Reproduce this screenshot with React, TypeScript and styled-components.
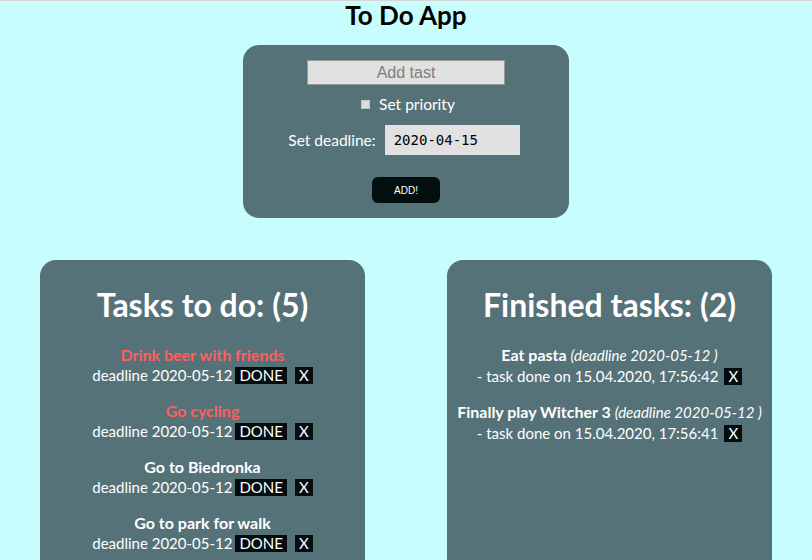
import React from "react";
import styled, { createGlobalStyle } from "styled-components";

const Global = createGlobalStyle`
  html { border-top: 1px solid #d6d6d6; background: #c8fdfe; }
  body { margin: 0; background: #c8fdfe; font-family: "Lato", "Open Sans", sans-serif; }
`;

const Page = styled.div`
  display: flex;
  flex-direction: column;
  align-items: center;
  width: 812px;
`;

const Title = styled.h1`
  margin: 0;
  height: 44px;
  flex-shrink: 0;
  line-height: 28px;
  font-size: 26px;
  font-weight: 700;
  color: #000;
`;

const FormPanel = styled.form`
  box-sizing: border-box;
  width: 326px;
  height: 173px;
  flex-shrink: 0;
  background: #557278;
  border-radius: 16px;
  display: flex;
  flex-direction: column;
  align-items: center;
  padding-top: 15px;
`;

const TextInput = styled.input`
  box-sizing: border-box;
  width: 198px;
  height: 25px;
  background: #e1e1e1;
  border: 1px solid #999;
  font-family: "Liberation Sans", Arial, sans-serif;
  font-size: 16px;
  text-align: center;
  outline: none;
  &::placeholder { color: #7d7d7d; }
`;

const CheckRow = styled.label`
  display: flex;
  align-items: center;
  gap: 9px;
  margin-top: 8px;
  margin-left: 4px;
  height: 22px;
  color: #fff;
  font-size: 15.5px;
`;

const Check = styled.input`
  appearance: none;
  margin: 0;
  width: 9px;
  height: 9px;
  background: #dcdcdc;
  border: 1px solid #c4c4c4;
  box-sizing: border-box;
`;

const DeadlineRow = styled.div`
  display: flex;
  align-items: center;
  gap: 9px;
  margin-top: 10px;
  margin-left: -4px;
  color: #fff;
  font-size: 15.5px;
`;

const DateInput = styled.input`
  box-sizing: border-box;
  width: 135px;
  height: 30px;
  background: #e1e1e1;
  border: none;
  padding: 0 0 0 9px;
  font-family: "DejaVu Sans Mono", monospace;
  font-size: 14px;
  color: #000;
  outline: none;
`;

const AddButton = styled.button`
  margin-top: 22px;
  width: 68px;
  height: 26px;
  background: #030f0f;
  color: #fff;
  border: none;
  border-radius: 6px;
  font-family: "Liberation Sans", Arial, sans-serif;
  font-size: 10px;
`;

const Columns = styled.div`
  display: flex;
  justify-content: space-between;
  width: 732px;
  margin-top: 42px;
`;

const ListPanel = styled.section`
  box-sizing: border-box;
  width: 325px;
  height: 300px;
  background: #557278;
  border-radius: 16px 16px 0 0;
  padding-top: 26px;
  display: flex;
  flex-direction: column;
  align-items: center;
  color: #fff;
`;

const ListTitle = styled.h2`
  margin: 0 0 20px;
  font-size: 32px;
  line-height: 38px;
  font-weight: 700;
`;

const Task = styled.div`
  display: flex;
  flex-direction: column;
  align-items: center;
  margin-bottom: 14px;
  font-size: 15px;
  line-height: 21px;
`;

const TaskName = styled.strong<{ $priority?: boolean }>`
  font-size: 16px;
  font-weight: 700;
  color: ${(p) => (p.$priority ? "#ff5e5e" : "#fff")};
`;

const Line = styled.div`
  display: flex;
  align-items: center;
`;

const Small = styled.button<{ $gap?: number }>`
  margin-left: ${(p) => p.$gap ?? 3}px;
  background: #030c0f;
  color: #fff;
  border: none;
  padding: 0 4px;
  height: 17px;
  font-family: "Lato", sans-serif;
  font-size: 15px;
  line-height: 17px;
`;

const Deadline = styled.em`
  font-weight: 400;
  font-style: italic;
`;

const todo = [
  { name: "Drink beer with friends", priority: true },
  { name: "Go cycling", priority: true },
  { name: "Go to Biedronka", priority: false },
  { name: "Go to park for walk", priority: false },
];

const done = [
  { name: "Eat pasta", at: "15.04.2020, 17:56:42" },
  { name: "Finally play Witcher 3", at: "15.04.2020, 17:56:41" },
];

export default function App() {
  return (
    <>
      <Global />
      <Page>
        <Title>To Do App</Title>
        <FormPanel onSubmit={(e) => e.preventDefault()}>
          <TextInput placeholder="Add tast" />
          <CheckRow>
            <Check type="checkbox" />
            Set priority
          </CheckRow>
          <DeadlineRow>
            Set deadline:
            <DateInput readOnly value="2020-04-15" />
          </DeadlineRow>
          <AddButton type="submit">ADD!</AddButton>
        </FormPanel>
        <Columns>
          <ListPanel>
            <ListTitle>Tasks to do: (5)</ListTitle>
            {todo.map((t) => (
              <Task key={t.name}>
                <TaskName $priority={t.priority}>{t.name}</TaskName>
                <Line>
                  deadline 2020-05-12
                  <Small>DONE</Small>
                  <Small $gap={8}>X</Small>
                </Line>
              </Task>
            ))}
          </ListPanel>
          <ListPanel>
            <ListTitle>Finished tasks: (2)</ListTitle>
            {done.map((t) => (
              <Task key={t.name}>
                <div>
                  <TaskName>{t.name}</TaskName>{" "}
                  <Deadline>(deadline 2020-05-12 )</Deadline>
                </div>
                <Line>
                  - task done on {t.at}
                  <Small $gap={6}>X</Small>
                </Line>
              </Task>
            ))}
          </ListPanel>
        </Columns>
      </Page>
    </>
  );
}
